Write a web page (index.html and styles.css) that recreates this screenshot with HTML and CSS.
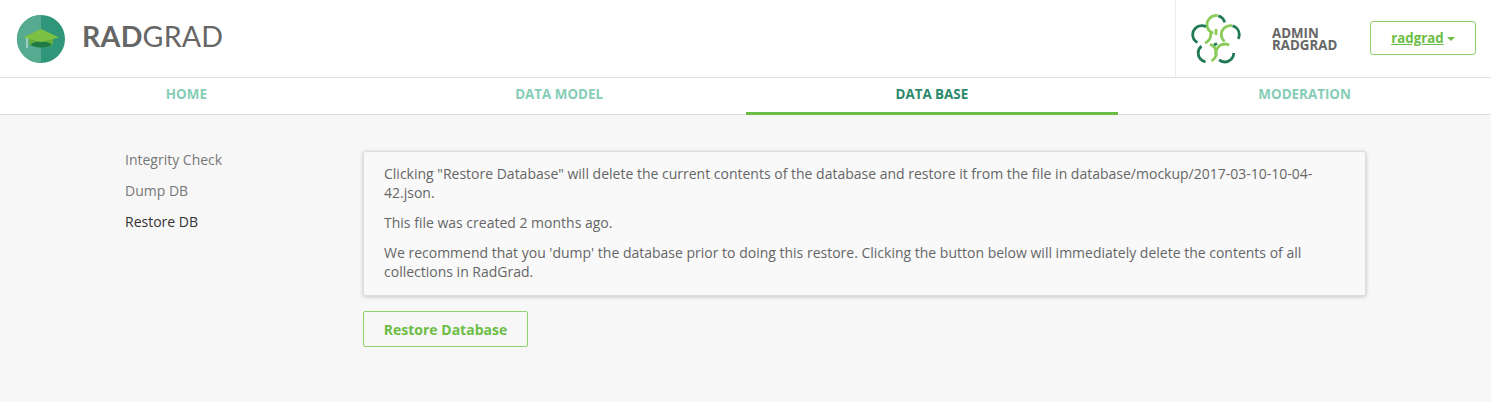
FILE: index.html
```html
<!DOCTYPE html>
<html lang="en">
<head>
  <meta charset="UTF-8">
  <title>RadGrad Admin</title>
  <link rel="stylesheet" href="styles.css">
</head>
<body>
  <div class="top-bar">
    <div class="brand">
      <svg class="brand-logo" width="48" height="48" viewBox="0 0 48 48">
        <circle cx="24" cy="24" r="24" fill="#2f9679"/>
        <path d="M24 0A24 24 0 0 0 24 48Z" fill="#55ab90"/>
        <path d="M12 22h24v7c-3 4-21 4-24 0Z" fill="#62ad3c"/>
        <ellipse cx="24" cy="29.500" rx="10" ry="3" fill="#1f7a45"/>
        <path d="M24 14 42 22.500 24 27 6 22.500Z" fill="#7cc144"/>
        <path d="M10 23v10" stroke="#b5dccd" stroke-width="1.500"/>
      </svg>
      <div class="brand-name"><b>RAD</b>GRAD</div>
    </div>
    <div class="user-box">
      <svg class="flower" width="50" height="50" viewBox="0 0 50 50" fill="none" stroke-width="2.800">
        <!-- top -->
        <circle cx="25" cy="10.500" r="9" stroke="#8acb5a" pathLength="100" stroke-dasharray="48 52" stroke-dashoffset="-30"/>
        <circle cx="25" cy="10.500" r="9" stroke="#1f7a55" pathLength="100" stroke-dasharray="17 83" stroke-dashoffset="-79"/>
        <!-- left -->
        <circle cx="10.700" cy="20.600" r="9" stroke="#1f7a55" pathLength="100" stroke-dasharray="50 50" stroke-dashoffset="-33"/>
        <circle cx="10.700" cy="20.600" r="9" stroke="#8acb5a" pathLength="100" stroke-dasharray="22 78" stroke-dashoffset="-97"/>
        <!-- right -->
        <circle cx="39.300" cy="20.600" r="9" stroke="#8acb5a" pathLength="100" stroke-dasharray="42 58" stroke-dashoffset="-36"/>
        <circle cx="39.300" cy="20.600" r="9" stroke="#1f7a55" pathLength="100" stroke-dasharray="29 71" stroke-dashoffset="-79"/>
        <!-- bottom left -->
        <circle cx="16.200" cy="39" r="9" stroke="#1f7a55" pathLength="100" stroke-dasharray="36 64" stroke-dashoffset="-28"/>
        <circle cx="16.200" cy="39" r="9" stroke="#8acb5a" pathLength="100" stroke-dasharray="37 63" stroke-dashoffset="-80"/>
        <!-- bottom right -->
        <circle cx="33.800" cy="39" r="9" stroke="#8acb5a" pathLength="100" stroke-dasharray="39 61" stroke-dashoffset="-44"/>
        <circle cx="33.800" cy="39" r="9" stroke="#1f7a55" pathLength="100" stroke-dasharray="36 64"/>
        <path d="M25 15v6" stroke="#8acb5a"/>
        <path d="M23 31l3-1.500" stroke="#1f7a55"/>
      </svg>
      <div class="user-name">ADMIN<br>RADGRAD</div>
      <div class="user-button">radgrad <span class="caret"></span></div>
    </div>
  </div>

  <div class="tabs">
    <div class="tab">HOME</div>
    <div class="tab">DATA MODEL</div>
    <div class="tab active">DATA BASE</div>
    <div class="tab">MODERATION</div>
  </div>

  <div class="page">
    <div class="side-menu">
      <div class="side-item">Integrity Check</div>
      <div class="side-item">Dump DB</div>
      <div class="side-item current">Restore DB</div>
    </div>
    <div class="content">
      <div class="notice">
        <p>Clicking "Restore Database" will delete the current contents of the database and restore it from the file in database/mockup/2017-03-10-10-04-42.json.</p>
        <p>This file was created 2 months ago.</p>
        <p>We recommend that you 'dump' the database prior to doing this restore. Clicking the button below will immediately delete the contents of all collections in RadGrad.</p>
      </div>
      <div class="restore-button">Restore Database</div>
    </div>
  </div>
</body>
</html>
```

FILE: styles.css
```css
html, body {
  height: 100%;
}

body {
  margin: 0;
  font-family: 'Open Sans', sans-serif;
  background-color: #f7f7f7;
  color: #666;
  overflow: hidden;
}

.top-bar {
  display: flex;
  justify-content: space-between;
  height: 77px;
  background-color: white;
  border-bottom: 1px solid #e0e0e0;
}

.brand {
  display: flex;
  align-items: center;
  gap: 17px;
  padding-left: 17px;
}

.brand-name {
  font-family: 'Lato', sans-serif;
  font-size: 28.600px;
  letter-spacing: 0.2px;
  color: #666;
  padding-bottom: 6px;
}

.user-box {
  display: flex;
  align-items: center;
  width: 316px;
  padding-left: 15px;
  box-sizing: border-box;
  border-left: 1px solid #eee;
}

.flower {
  flex: none;
}

.user-name {
  margin-left: 31px;
  width: 98px;
  font-size: 13.300px;
  line-height: 12px;
  font-weight: bold;
  color: #666;
}

.user-button {
  display: flex;
  align-items: center;
  justify-content: center;
  gap: 3px;
  width: 106px;
  height: 34px;
  margin-top: -1px;
  box-sizing: border-box;
  background-color: white;
  border: 1px solid #8fd06f;
  border-radius: 3px;
  color: #6cbd45;
  font-size: 13.300px;
  font-weight: bold;
  text-decoration: underline;
}

.caret {
  width: 0;
  height: 0;
  margin-top: 2px;
  border-left: 4px solid transparent;
  border-right: 4px solid transparent;
  border-top: 4px solid #6cbd45;
}

.tabs {
  display: grid;
  grid-template-columns: repeat(4, 1fr);
  height: 36px;
  background-color: white;
  border-bottom: 1px solid #ddd;
}

.tab {
  height: 37px;
  box-sizing: border-box;
  padding-top: 7px;
  text-align: center;
  font-size: 13.400px;
  font-weight: bold;
  color: #86cdb6;
}

.tab.active {
  color: #2b8a6c;
  border-bottom: 3px solid #6cbd45;
}

.page {
  display: flex;
  padding-top: 36px;
}

.side-menu {
  width: 238px;
  margin-left: 125px;
  flex: none;
}

.side-item {
  font-size: 14px;
  line-height: 17px;
  margin-bottom: 14px;
  color: #777;
}

.side-item.current {
  color: #333;
}

.content {
  width: 1003px;
}

.notice {
  padding: 12px 20px 14px;
  background-color: #f9f9f9;
  border: 1px solid #ddd;
  border-radius: 2px;
  box-shadow: 0 1px 4px rgba(0, 0, 0, 0.2);
  font-size: 14px;
  line-height: 19.300px;
}

.notice p {
  margin: 0 0 10.500px;
}

.notice p:last-child {
  margin-bottom: 0;
}

.restore-button {
  width: 165px;
  height: 36px;
  margin-top: 15px;
  box-sizing: border-box;
  display: flex;
  align-items: center;
  justify-content: center;
  border: 1px solid #8fd06f;
  border-radius: 2px;
  color: #6cbd45;
  font-size: 14px;
  font-weight: bold;
}
```
